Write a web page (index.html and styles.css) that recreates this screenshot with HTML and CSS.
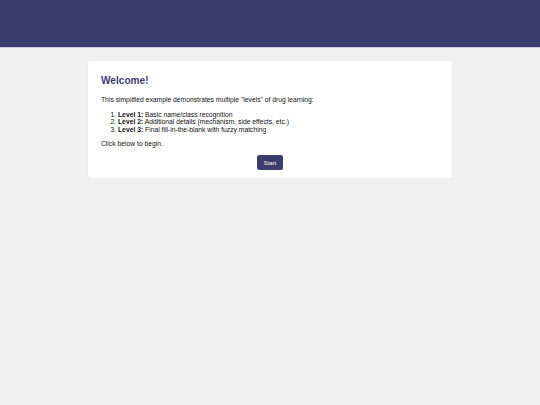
FILE: index.html
```html
<!DOCTYPE html>
<html lang="en">
<head>
    <meta charset="UTF-8">
    <meta name="viewport" content="width=device-width, initial-scale=1.0">
    <title>Drug Learning</title>
    <link rel="stylesheet" href="styles.css">
</head>
<body>
    <header class="topbar"></header>

    <main class="card">
        <h2 class="card-title">Welcome!</h2>
        <p class="intro">This simplified example demonstrates multiple "levels" of drug learning:</p>
        <ol class="levels">
            <li><strong>Level 1:</strong> Basic name/class recognition</li>
            <li><strong>Level 2:</strong> Additional details (mechanism, side effects, etc.)</li>
            <li><strong>Level 3:</strong> Final fill-in-the-blank with fuzzy matching</li>
        </ol>
        <p class="hint">Click below to begin.</p>
        <div class="actions">
            <button class="btn">Start</button>
        </div>
    </main>
</body>
</html>
```

FILE: styles.css
```css
* {
    margin: 0;
    padding: 0;
    box-sizing: border-box;
}

body {
    background-color: #f0f0f0;
    font-family: "Liberation Sans", Arial, sans-serif;
    font-size: 6.75px;
    line-height: 7.6px;
    color: #111;
}

.topbar {
    height: 48px;
    background-color: #3c3b6e;
    border-bottom: 1px solid #cfcae8;
}

.card {
    width: 364px;
    margin: 13px auto 0;
    padding: 14px 13px 8px;
    background-color: #fff;
    border-radius: 4px;
    box-shadow: 0 1px 2px rgba(0,0,0,0.05);
}

.card-title {
    font-size: 10.1px;
    line-height: 12px;
    color: #3c3b6e;
    margin-bottom: 8.5px;
}

.intro {
    margin-bottom: 7.5px;
}

.levels {
    padding-left: 17px;
    margin-bottom: 6.75px;
}

.hint {
    margin-bottom: 7.5px;
}

.actions {
    display: flex;
    justify-content: center;
}

.btn {
    height: 15px;
    padding: 0 7px;
    background-color: #3c3b6e;
    color: #fff;
    border: none;
    border-radius: 2.5px;
    font-family: inherit;
    font-size: 5.9px;
    cursor: pointer;
}
```
